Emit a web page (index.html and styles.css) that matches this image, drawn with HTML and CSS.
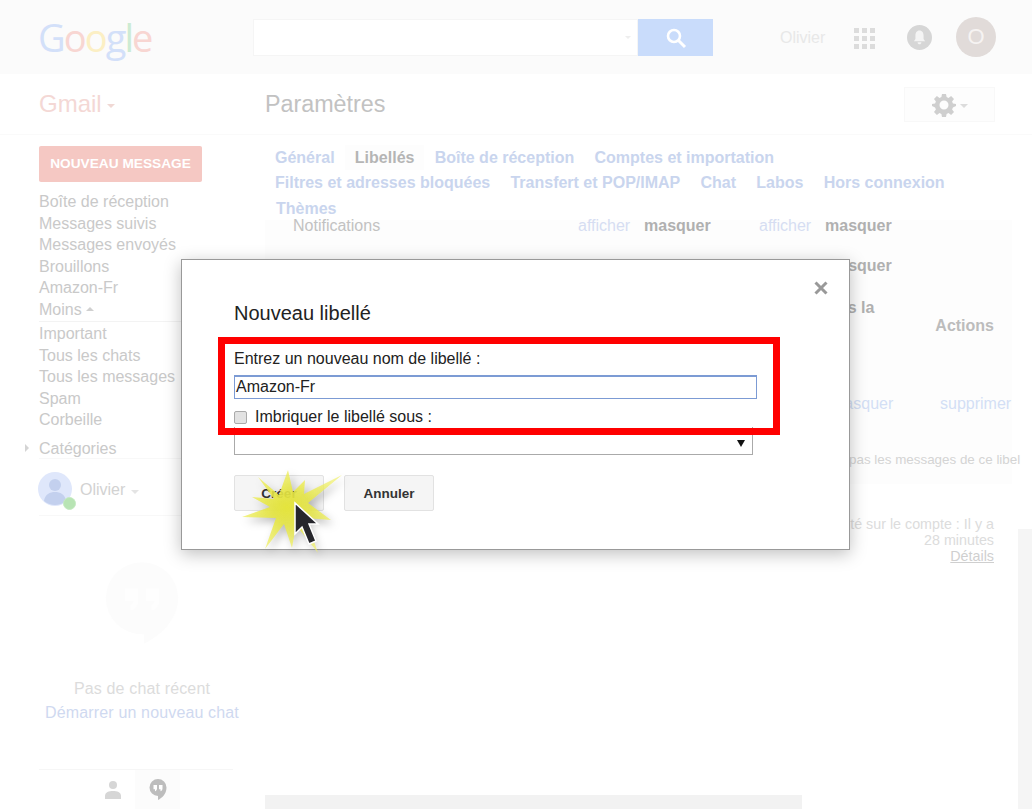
FILE: index.html
```html
<!DOCTYPE html>
<html lang="fr">
<head>
<meta charset="utf-8">
<title>Paramètres - Gmail</title>
<link rel="stylesheet" href="styles.css">
</head>
<body>
<div class="page">
  <header class="topbar">
    <div class="logo"><span class="g-blue">G</span><span class="g-red">o</span><span class="g-yellow">o</span><span class="g-blue">g</span><span class="g-green">l</span><span class="g-red">e</span></div>
    <div class="search">
      <div class="search-input"><span class="caret-tiny"></span></div>
      <button class="search-btn" type="button" aria-label="Rechercher">
        <svg width="22" height="22" viewBox="0 0 22 22"><circle cx="9" cy="9" r="6" fill="none" stroke="#fff" stroke-width="2.6"/><path d="M13.5 13.5 20 20" stroke="#fff" stroke-width="3"/></svg>
      </button>
    </div>
    <div class="account">
      <span class="account-name">Olivier</span>
      <div class="apps"><i></i><i></i><i></i><i></i><i></i><i></i><i></i><i></i><i></i></div>
      <div class="bell">
        <svg width="13" height="15" viewBox="0 0 14 16"><path d="M7 0.5C4 0.5 2.6 3 2.6 6v3.5L1 12h12l-1.6-2.5V6C11.4 3 10 .5 7 .5ZM5 13c0 1.4 1 2.300 2 2.300S9 14.400 9 13Z" fill="#f4f4f4"/></svg>
      </div>
      <div class="avatar">O</div>
    </div>
  </header>

  <div class="subbar">
    <div class="brand">Gmail<span class="caret"></span></div>
    <h1 class="page-title">Paramètres</h1>
    <button class="gear-btn" type="button" aria-label="Paramètres">
      <svg width="24" height="24" viewBox="0 0 24 24"><path fill="#cfcfcf" fill-rule="evenodd" d="M10 1h4l.6 3.1 1.9.8L19.1 3l2.9 2.9-1.9 2.6.8 1.9L24 11v2l-3.1 1.6-.8 1.9 1.9 2.6-2.9 2.9-2.6-1.9-1.9.8L14 24h-4l-.6-3.1-1.9-.8L4.900 22 2 19.100l1.900-2.600-.8-1.900L0 13v-2l3.100-.6.8-1.900L2 5.900 4.900 3l2.600 1.900 1.900-.8ZM12 7.500a4.500 4.500 0 1 0 0 9 4.500 4.500 0 0 0 0-9Z"/></svg>
      <span class="caret caret-grey"></span>
    </button>
  </div>

  <div class="content">
    <aside class="sidebar">
      <button class="compose" type="button">NOUVEAU MESSAGE</button>
      <nav class="nav">
        <a>Boîte de réception</a>
        <a>Messages suivis</a>
        <a>Messages envoyés</a>
        <a>Brouillons</a>
        <a>Amazon-Fr</a>
        <a class="more">Moins<span class="caret-up"></span></a>
      </nav>
      <nav class="nav nav-second">
        <a>Important</a>
        <a>Tous les chats</a>
        <a>Tous les messages</a>
        <a>Spam</a>
        <a>Corbeille</a>
      </nav>
      <div class="categories"><span class="tri"></span>Catégories</div>
      <div class="me">
        <div class="me-pic">
          <svg width="34" height="34" viewBox="0 0 34 34"><circle cx="17" cy="17" r="17" fill="#dfe7fb"/><circle cx="17" cy="13" r="6" fill="#c3d0ee"/><path d="M6 29c1-7 6-9 11-9s10 2 11 9a17 17 0 0 1-22 0Z" fill="#c3d0ee"/></svg>
          <span class="presence"></span>
        </div>
        <span class="me-name">Olivier</span><span class="caret caret-light"></span>
      </div>
      <div class="hangout">
        <svg width="76" height="86" viewBox="0 0 80 90"><path fill="#fcfcfc" d="M40 2a38 38 0 0 0 0 76h2v10c18-9 36-26 36-48A38 38 0 0 0 40 2Z"/><path fill="#fefefe" d="M22 30h14v13c0 6-4 9-8 10v-6c2 0 3-2 3-4h-9ZM44 30h14v13c0 6-4 9-8 10v-6c2 0 3-2 3-4h-9Z"/></svg>
      </div>
      <p class="no-chat">Pas de chat récent</p>
      <p class="new-chat">Démarrer un nouveau chat</p>
      <div class="side-tabs">
        <span class="side-tab">
          <svg width="18" height="20" viewBox="0 0 18 20"><circle cx="9" cy="5" r="4" fill="#d6d6d6"/><path d="M1 19v-3c0-4 4-5 8-5s8 1 8 5v3Z" fill="#d6d6d6"/></svg>
        </span>
        <span class="side-tab side-tab-on">
          <svg width="18" height="22" viewBox="0 0 18 22"><path fill="#bdbdbd" d="M9 0a8.500 8.500 0 0 0 0 17v4c4-2 8.500-6 8.500-12.500A8.500 8.500 0 0 0 9 0Z"/><path fill="#fff" d="M4.500 6h3.500v3.500c0 1.500-1 2.500-2 2.800v-2H4.500ZM10 6h3.500v3.500c0 1.500-1 2.500-2 2.800v-2H10Z"/></svg>
        </span>
      </div>
    </aside>

    <main class="main">
      <div class="tabs">
        <a>Général</a><a class="tab-on">Libellés</a><a>Boîte de réception</a><a>Comptes et importation</a>
        <a>Filtres et adresses bloquées</a><a>Transfert et POP/IMAP</a><a>Chat</a><a>Labos</a><a>Hors connexion</a>
        <a class="tab-last">Thèmes</a>
      </div>
      <div class="panel">
        <div class="row row-first">
          <span class="cell-label">Notifications</span>
          <a class="link">afficher</a><b>masquer</b><a class="link">afficher</a><b>masquer</b>
        </div>
        <div class="row row-second">
          <span class="cell-label">Tchats</span>
          <a class="link">afficher</a><b>masquer</b><a class="link">afficher</a><b>masquer</b>
        </div>
        <div class="head-row">
          <b class="head-show">Afficher dans la</b>
          <b class="head-actions">Actions</b>
        </div>
        <div class="row row-label">
          <span></span><span></span><span></span><span></span>
          <a class="link link-shift">masquer</a><a class="link">supprimer</a>
        </div>
        <div class="note">pas les messages de ce libel</div>
      </div>
      <div class="activity">
        <div>activité sur le compte : Il y a</div>
        <div>28 minutes</div>
        <a>Détails</a>
      </div>
      <div class="bottom-bar"></div>
    </main>
  </div>

  <div class="scrollbar"></div>

  <section class="dialog">
    <button class="close" type="button" aria-label="Fermer">
      <svg width="14" height="14" viewBox="0 0 14 14"><path d="M1.500 1.500 12.500 12.500M12.500 1.500 1.500 12.500" stroke="#999" stroke-width="3"/></svg>
    </button>
    <h2 class="dialog-title">Nouveau libellé</h2>
    <label class="field-label">Entrez un nouveau nom de libellé :</label>
    <div class="text-input">Amazon-Fr</div>
    <div class="nest"><span class="check"></span>Imbriquer le libellé sous :</div>
    <div class="select"><span class="select-arrow"></span></div>
    <div class="actions">
      <button class="btn" type="button">Créer</button>
      <button class="btn" type="button">Annuler</button>
    </div>
    <div class="highlight"></div>
    <svg class="burst" width="115" height="95" viewBox="235 465 115 95">
      <defs>
        <radialGradient id="bu" cx="0.45" cy="0.45" r="0.55">
          <stop offset="0" stop-color="#e4e43c"/>
          <stop offset="0.4" stop-color="#e8e845" stop-opacity="0.88"/>
          <stop offset="1" stop-color="#f0f068" stop-opacity="0.7"/>
        </radialGradient>
      </defs>
      <polygon class="burst-star" fill="url(#bu)" points="258,477 279,495 288,470 293,492 305,480 304,494 342,475 308,503 331,520 306,518 318,553 296,525 292,548 284,524 265,549 276,518 242,517 270,507 252,497 274,499"/>
      <polygon class="pointer" points="295,503 295,534 302,527 309,544 316,541 309,524 318,524"/>
    </svg>
  </section>
</div>
</body>
</html>
```

FILE: styles.css
```css
* { box-sizing: border-box; }
html, body { margin: 0; padding: 0; }
body { font-family: "Liberation Sans", Arial, sans-serif; font-size: 16px; color: #bbb; background: #fff; }
button { font-family: inherit; }
p, h1, h2 { margin: 0; font-weight: normal; }

.page { position: relative; width: 1032px; height: 809px; overflow: hidden; display: flex; flex-direction: column; background: #fff; }

/* Top bar */
.topbar { height: 74px; flex: none; background: #fbfbfb; display: flex; align-items: flex-start; padding-left: 38px; }
.logo { width: 215px; margin-top: 12px; font-family: "Open Sans", sans-serif; font-size: 38px; line-height: 50px; letter-spacing: -1.9px; }
.g-blue { color: #d3e0f9; }
.g-red { color: #f8d6d2; }
.g-yellow { color: #fcefc4; }
.g-green { color: #cdebd3; }
.search { display: flex; margin-top: 19px; height: 37px; }
.search-input { width: 385px; background: #fff; border: 1px solid #f5f5f5; position: relative; }
.caret-tiny { position: absolute; right: 6px; top: 16px; border: 3.5px solid transparent; border-top-color: #eee; }
.search-btn { width: 75px; border: 0; padding: 0; background: #c9dcfb; display: flex; align-items: center; justify-content: center; }
.account { margin-left: 67px; display: flex; align-items: flex-start; }
.account-name { margin-top: 29px; width: 74px; color: #e8e8e8; line-height: 18px; }
.apps { margin-top: 28px; display: grid; grid-template-columns: repeat(3, 5px); grid-auto-rows: 5px; gap: 3px; width: 53px; }
.apps i { background: #dcdcdc; }
.bell { margin-top: 25px; width: 25px; height: 25px; border-radius: 50%; background: #d6d6d6; display: flex; align-items: center; justify-content: center; }
.avatar { margin: 17px 0 0 24px; width: 40px; height: 40px; border-radius: 50%; background: #e1dbd9; color: #f6f3f2; font-size: 22px; line-height: 40px; text-align: center; }

/* Sub bar */
.subbar { height: 61px; flex: none; display: flex; align-items: flex-start; padding-left: 39px; border-bottom: 1px solid #fafafa; }
.brand { width: 226px; margin-top: 16px; font-size: 24px; line-height: 28px; color: #f4d8d5; display: flex; align-items: center; }
.caret { display: inline-block; margin-left: 5px; margin-top: 3px; border: 4px solid transparent; border-top-color: #f0d8d4; border-bottom: 0; }
.page-title { width: 639px; margin-top: 16px; font-size: 23.300px; line-height: 28px; color: #c2c2c2; }
.gear-btn { margin-top: 13px; width: 91px; height: 35px; border: 1px solid #f8f8f8; background: #fdfdfd; padding: 0 0 0 27px; display: flex; align-items: center; }
.caret-grey { border-top-color: #dcdcdc; margin-left: 4px; }

/* Content */
.content { flex: 1; display: flex; min-height: 0; }
.sidebar { width: 265px; flex: none; padding: 11px 32px 0 39px; }
.compose { display: block; width: 163px; height: 35px; border: 0; border-radius: 2px; padding: 0; background: #f5c8c3; color: #fff; font-weight: bold; font-size: 13.700px; box-shadow: 0 1px 0 #f5c8c3; }
.nav { display: flex; flex-direction: column; line-height: 21.500px; color: #c9c9c9; }
.nav:first-of-type { margin-top: 10px; }
.nav a { display: block; height: 21.500px; white-space: nowrap; }
.more { display: flex !important; align-items: center; }
.caret-up { margin-left: 4px; border: 4px solid transparent; border-bottom-color: #d0d0d0; border-top: 0; }
.nav-second { margin-top: 1px; padding-top: 1px; border-top: 1px solid #f3f3f3; }
.categories { position: relative; margin-top: 7px; line-height: 21px; color: #c9c9c9; border-bottom: 1px solid #f8f8f8; height: 21px; }
.tri { position: absolute; left: -14px; top: 6px; border: 4px solid transparent; border-left-color: #d4d4d4; border-right: 0; }
.me { display: flex; align-items: center; height: 57px; padding-top: 7px; border-bottom: 1px solid #f8f8f8; color: #d2d2d2; }
.me-pic { position: relative; width: 34px; height: 34px; margin-left: -1px; margin-top: -2px; }
.me-pic svg { display: block; }
.presence { position: absolute; left: 25px; top: 25px; width: 13px; height: 13px; border-radius: 50%; background: #b8e4b4; border: 1px solid #c6eac3; }
.me-name { margin-left: 8px; }
.caret-light { border-top-color: #e4e4e4; margin-left: 6px; }
.hangout { display: flex; justify-content: center; margin-top: 44px; height: 86px; padding-left: 12px; }
.hangout svg { flex: none; }
.no-chat { margin-top: 31px; line-height: 24px; text-align: center; color: #dcdcdc; white-space: nowrap; padding-left: 12px; letter-spacing: 0.15px; }
.new-chat { line-height: 24px; text-align: center; color: #cfd9f0; white-space: nowrap; margin: 0 -10px; padding-left: 12px; letter-spacing: 0.15px; }
.side-tabs { margin-top: 44px; border-top: 1px solid #f6f6f6; height: 41px; display: flex; padding-left: 51px; }
.side-tab { width: 45px; display: flex; align-items: center; justify-content: center; }
.side-tab-on { background: #fcfcfc; }

/* Main */
.main { flex: 1; min-width: 0; display: flex; flex-direction: column; }
.tabs { height: 85px; padding: 10px 30px 0 10px; display: flex; flex-wrap: wrap; align-content: flex-start; column-gap: 20.250px; font-weight: bold; line-height: 25px; color: #c9d5ee; }
.tabs a { white-space: nowrap; }
.tab-on { color: #b5b5b5; background: #fdfdfd; padding: 0 10px; margin: 0 -10px; }
.tab-last { margin-top: 1px; margin-left: 1px; }
.panel { width: 747px; height: 264px; background: #fdfdfd; padding-left: 28px; margin-bottom: 32px; }
.row { display: grid; grid-template-columns: 285px 66px 115px 66px 115px 1fr; grid-template-rows: 100%; align-items: center; white-space: nowrap; line-height: 18px; }
.row b { color: #b0b0b0; }
.cell-label { color: #c2c2c2; }
.link { color: #d6ddf2; }
.link-shift { margin-left: 6px; }
.row-first { height: 18px; margin-top: -3px; position: relative; }
.row-second { height: 38px; margin-top: 12px; }
.row-label { height: 24px; margin-top: 53px; }
.row-label .link { color: #d3dff5; }
.head-row { display: flex; justify-content: flex-end; height: 40px; margin-top: 14px; padding-right: 18px; font-weight: bold; line-height: 18px; white-space: nowrap; }
.head-show { margin-right: 61px; color: #b0b0b0; }
.head-actions { margin-top: 18px; color: #bcbcbc; }
.note { margin-top: 35px; padding-left: 556px; font-size: 13.400px; line-height: 18px; color: #d4d4d4; white-space: nowrap; }
.activity { width: 729px; text-align: right; font-size: 14.300px; line-height: 16px; color: #dcdcdc; white-space: nowrap; }
.activity a { text-decoration: underline; color: #cfcfcf; }
.bottom-bar { margin-top: auto; width: 537px; height: 14px; flex: none; background: #f2f2f2; }

.scrollbar { position: absolute; right: 0; top: 529px; bottom: 0; width: 14px; background: #f5f5f5; }

/* Dialog */
.dialog { position: absolute; left: 181px; top: 259px; width: 669px; height: 291px; background: #fff; border: 1px solid #999; box-shadow: 0 4px 16px rgba(0, 0, 0, 0.25); padding: 41px 52px 0; color: #222; }
.close { position: absolute; right: 21px; top: 21px; width: 14px; height: 14px; padding: 0; border: 0; background: none; display: block; }
.close svg { display: block; }
.dialog-title { font-size: 20px; line-height: 24px; color: #222; }
.field-label { display: block; margin-top: 24px; line-height: 20px; font-size: 16px; }
.text-input { margin-top: 6px; width: 523px; height: 24px; border: 1px solid #7c9bd4; border-top-width: 2px; padding-left: 1px; line-height: 20px; color: #222; }
.nest { display: flex; align-items: center; margin-top: 8px; height: 20px; font-size: 16px; }
.check { width: 13px; height: 13px; margin-right: 8px; border: 1px solid #aaa; border-radius: 2px; background: #e2e2e2; }
.select { position: relative; width: 519px; height: 28px; border: 1px solid #aaa; border-top: 0; }
.select-arrow { position: absolute; right: 7px; top: 13px; border: 4px solid transparent; border-top: 7px solid #111; border-bottom: 0; }
.actions { display: flex; gap: 20px; margin-top: 20px; }
.btn { width: 90px; height: 36px; padding: 0; border: 1px solid #e2e2e2; border-radius: 2px; background: #f5f5f5; color: #333; font-weight: bold; font-size: 13.500px; }
.highlight { position: absolute; left: 36px; top: 77px; width: 562px; height: 98px; border: 7px solid #f00; }
.burst { position: absolute; left: 53px; top: 205px; overflow: visible; }
.burst-star { filter: drop-shadow(3px 4px 4px rgba(0, 0, 0, 0.3)); }
.pointer { fill: #26262c; stroke: #fff; stroke-width: 1.500; }
```
